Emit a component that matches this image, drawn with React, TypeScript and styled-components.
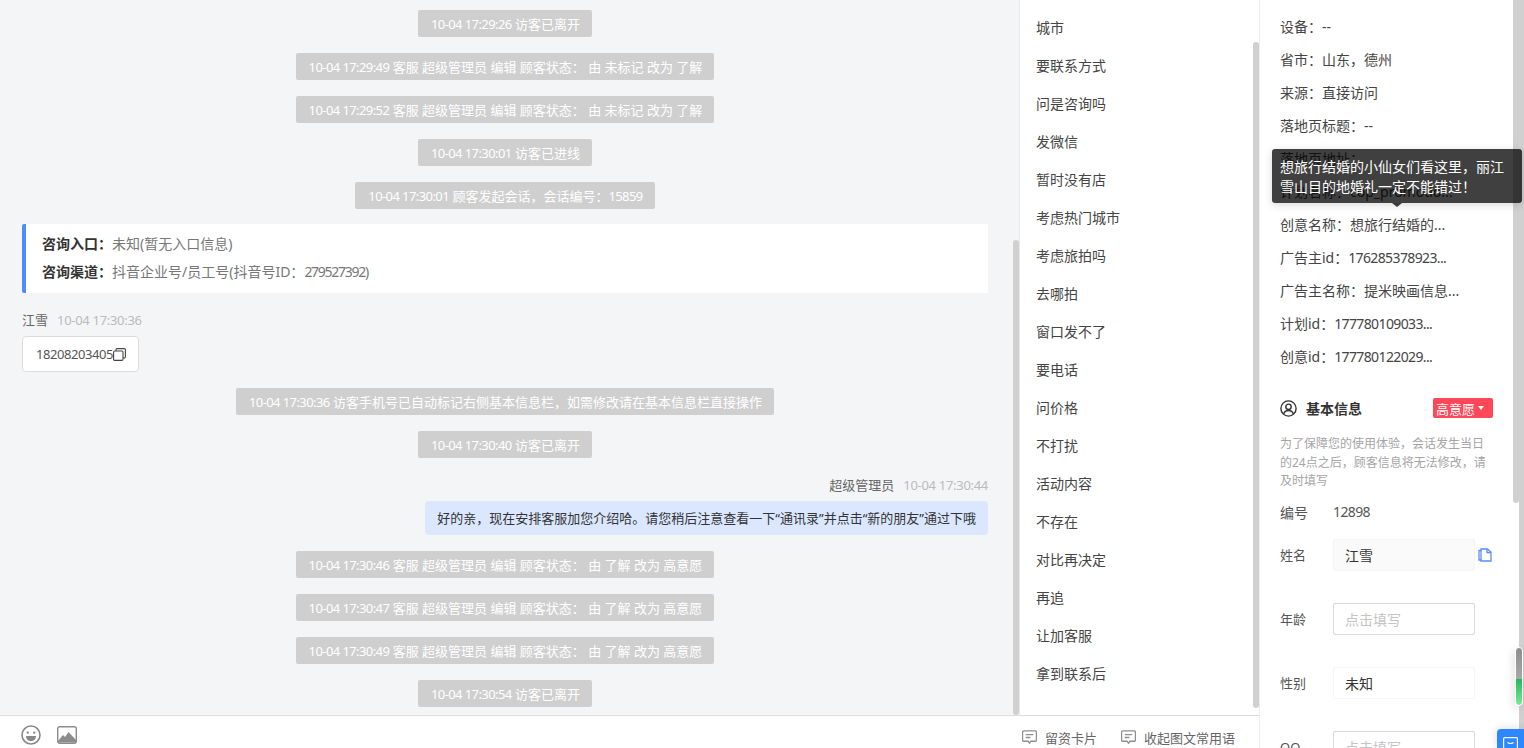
import React from 'react';
import styled, { createGlobalStyle } from 'styled-components';

const GlobalStyle = createGlobalStyle`
  html, body {
    margin: 0;
    padding: 0;
    height: 100%;
    overflow: hidden;
    background: #fff;
    font-family: "Noto Sans", "Noto Sans CJK SC", sans-serif;
    font-size: 14px;
    color: #333;
  }
  * {
    box-sizing: border-box;
  }
`;

const Page = styled.div`
  display: flex;
  width: 1524px;
  height: 748px;
  overflow: hidden;
`;

const Main = styled.div`
  display: flex;
  flex-direction: column;
  width: 1260px;
  height: 100%;
  border-right: 1px solid #ececec;
`;

const Top = styled.div`
  display: flex;
  height: 715px;
`;

const Chat = styled.div`
  position: relative;
  width: 1020px;
  height: 100%;
  padding: 10px 31px 0 22px;
  display: flex;
  flex-direction: column;
  gap: 16px;
  align-items: center;
  overflow: hidden;
  background: #f4f5f7;
  border-right: 1px solid #e8e8e8;
`;

// digits of the original font are narrower than Noto Sans
const Num = styled.span`
  letter-spacing: -0.045em;
`;

const Notice = styled.div`
  flex: none;
  height: 27px;
  padding: 0 12px 0 13px;
  display: flex;
  align-items: center;
  white-space: pre;
  border-radius: 2px;
  background: #cfcfcf;
  color: #fff;
  font-size: 13px;
`;

const EntryCard = styled.div`
  flex: none;
  align-self: stretch;
  height: 69px;
  margin-top: -1px;
  padding: 6px 16px;
  background: #fff;
  border-left: 4px solid #4c8dff;
  border-radius: 2px 0 0 2px;
  color: #777;
`;

const EntryLine = styled.div`
  height: 28px;
  line-height: 28px;
  b {
    color: #333;
    font-weight: 700;
  }
  ${Num} {
    letter-spacing: -0.09em;
  }
`;

const Group = styled.div<{ $mine?: boolean }>`
  flex: none;
  align-self: stretch;
  display: flex;
  flex-direction: column;
  align-items: ${(p) => (p.$mine ? 'flex-end' : 'flex-start')};
  gap: 7px;
`;

const SenderLine = styled.div`
  display: flex;
  gap: 9px;
  height: 20px;
  line-height: 22px;
  font-size: 13px;
  color: #666;
  span {
    color: #bbb;
    letter-spacing: -0.3px;
  }
`;

const PhoneBubble = styled.div`
  display: flex;
  align-items: center;
  height: 36px;
  padding: 0 12px 0 13px;
  background: #fff;
  border: 1px solid #dcdcdc;
  border-radius: 4px;
  font-size: 13px;
  letter-spacing: -0.43px;
  color: #555;
`;

const MineBubble = styled.div`
  height: 34px;
  padding: 0 12px;
  line-height: 34px;
  background: #dbe7ff;
  border-radius: 4px;
  color: #333;
  font-size: 13px;
`;

const ScrollThumb = styled.div<{ $top: number; $bottom: number; $left: number }>`
  position: absolute;
  top: ${(p) => p.$top}px;
  bottom: ${(p) => p.$bottom}px;
  left: ${(p) => p.$left}px;
  width: 6px;
  background: #d0d0d0;
  border-radius: 3px;
`;

const Phrases = styled.div`
  position: relative;
  width: 239px;
  height: 100%;
  padding-top: 9px;
  background: #fff;
`;

const Phrase = styled.div`
  height: 38px;
  line-height: 38px;
  padding-left: 16px;
  color: #444;
`;

const Footer = styled.div`
  flex: 1;
  display: flex;
  align-items: center;
  justify-content: space-between;
  border-top: 1px solid #dcdcdc;
  background: #fff;
  padding: 0 24px 0 21px;
`;

const Tools = styled.div`
  display: flex;
  align-items: center;
  gap: 16px;
  margin-top: 6px;
`;

const Actions = styled.div`
  display: flex;
  align-items: center;
  gap: 24px;
  margin-top: 10px;
`;

const Action = styled.div`
  display: flex;
  align-items: center;
  gap: 8px;
  font-size: 13px;
  color: #666;
`;

const Side = styled.div`
  position: relative;
  flex: 1;
  height: 100%;
  padding: 10px 0 0 20px;
  overflow: hidden;
  background: #fff;
`;

const InfoRow = styled.div`
  height: 33px;
  line-height: 33px;
  white-space: pre;
  color: #444;
`;

const SectionHead = styled.div`
  display: flex;
  align-items: center;
  height: 20px;
  width: 213px;
  margin-top: 25px;
  font-size: 14px;
  font-weight: 700;
  color: #333;
  svg {
    margin-right: 9px;
  }
`;

const IntentTag = styled.div`
  display: flex;
  align-items: center;
  gap: 3px;
  width: 60px;
  height: 20px;
  padding-left: 3px;
  margin-left: auto;
  border-radius: 2px;
  background: #ff4757;
  color: #fff;
  font-size: 13px;
  font-weight: 400;
  &::after {
    content: '';
    border: 3.5px solid transparent;
    border-top: 4px solid #fff;
    border-bottom: 0;
  }
`;

const Hint = styled.div`
  width: 212px;
  margin-top: 17px;
  font-size: 12px;
  line-height: 18.5px;
  color: #a5a5a5;
`;

const FormRow = styled.div<{ $height: number }>`
  display: flex;
  align-items: center;
  height: ${(p) => p.$height}px;
  color: #555;
`;

const FormLabel = styled.div<{ $large?: boolean }>`
  width: 53px;
  font-size: ${(p) => (p.$large ? 14 : 13)}px;
`;

const Field = styled.div<{ $variant: 'filled' | 'empty' | 'plain' }>`
  display: flex;
  align-items: center;
  width: 142px;
  height: 32px;
  padding-left: 11px;
  border-radius: 2px;
  border: 1px solid
    ${(p) => (p.$variant === 'empty' ? '#d9d9d9' : '#f5f5f5')};
  background: ${(p) => (p.$variant === 'filled' ? '#fafafa' : '#fff')};
  color: ${(p) => (p.$variant === 'empty' ? '#c4c4c4' : '#333')};
`;

const CopyField = styled.span`
  display: flex;
  margin-left: 3px;
`;

const Tooltip = styled.div`
  position: absolute;
  left: 12px;
  top: 149px;
  width: 250px;
  height: 54px;
  padding: 8px 8px;
  border-radius: 3px;
  background: rgba(0, 0, 0, 0.75);
  box-shadow: 0 2px 8px rgba(0, 0, 0, 0.15);
  color: #fff;
  font-size: 14px;
  line-height: 20px;
  font-weight: 400;
  &::after {
    content: '';
    position: absolute;
    left: 120px;
    top: 54px;
    border: 5px solid transparent;
    border-top: 4px solid rgba(0, 0, 0, 0.75);
    border-bottom: 0;
  }
`;

const OuterTrack = styled.div`
  position: absolute;
  right: 0;
  top: 0;
  bottom: 0;
  width: 5px;
  background: #d0d0d0;
`;

const MiniBar = styled.div`
  position: absolute;
  left: 255px;
  top: 647px;
  width: 8px;
  height: 59px;
  border-radius: 4px;
  border: 1px solid #fff;
  overflow: hidden;
  box-shadow: -2px 3px 8px rgba(0, 0, 0, 0.12);
  background: linear-gradient(#8e8e8e, #a8a8a8 54%, #22b85a 54%, #7fe79a);
`;

const ChatButton = styled.div`
  position: absolute;
  right: 0;
  top: 729px;
  width: 27px;
  height: 19px;
  display: flex;
  justify-content: center;
  padding-top: 8px;
  border-radius: 4px 0 0 0;
  background: #2d87ff;
  box-shadow: 0 0 10px rgba(0, 0, 0, 0.15);
`;

const SmileIcon = () => (
  <svg width="20" height="20" viewBox="0 0 20 20">
    <circle cx="10" cy="10" r="9" fill="none" stroke="#888" strokeWidth="1.6" />
    <circle cx="6.8" cy="7.6" r="1.2" fill="#888" />
    <circle cx="13.2" cy="7.6" r="1.2" fill="#888" />
    <path d="M5 11h10c0 3-2.200 5-5 5s-5-2-5-5z" fill="#888" />
  </svg>
);

const PictureIcon = () => (
  <svg width="20" height="18" viewBox="0 0 20 18">
    <rect x="0.7" y="0.7" width="18.600" height="16.600" rx="2" fill="#fff" stroke="#8c8c8c" strokeWidth="1.400" />
    <path d="M1 15l5-6 2 2 3.500-5 7.500 8v2.500H1z" fill="#8c8c8c" />
  </svg>
);

const MessageIcon = () => (
  <svg width="15" height="15" viewBox="0 0 16 16" fill="none" stroke="#8f8f8f" strokeWidth="1.400">
    <path d="M2 1h12a1.400 1.400 0 0 1 1.400 1.400v8.200A1.400 1.400 0 0 1 14 12H9.500L8 14 6.500 12H2A1.400 1.400 0 0 1 .6 10.600V2.400A1.400 1.400 0 0 1 2 1z" />
    <path d="M4 5h8M4 8h5" />
  </svg>
);

const CopyIcon = () => (
  <svg width="13" height="13" viewBox="0 0 13 13" fill="none" stroke="#444" strokeWidth="1.100">
    <rect x="0.600" y="3" width="9.400" height="9.400" rx="1.200" />
    <path d="M3 3V1.800A1.200 1.200 0 0 1 4.200.6h7a1.200 1.200 0 0 1 1.200 1.200v7a1.200 1.200 0 0 1-1.200 1.200H10" />
  </svg>
);

const UserCircleIcon = () => (
  <svg width="17" height="17" viewBox="0 0 17 17" fill="none" stroke="#333" strokeWidth="1.400">
    <circle cx="8.500" cy="8.500" r="7.600" />
    <circle cx="8.500" cy="6.800" r="2.700" />
    <path d="M3.600 14c.7-2.300 2.600-3.500 4.900-3.500s4.200 1.200 4.900 3.500" />
  </svg>
);

const DocIcon = () => (
  <svg width="14" height="14" viewBox="0 0 14 14" fill="none" stroke="#5b8cff" strokeWidth="1.300">
    <path d="M1 2.500h2V1h6.500L13 4v9H3v-1H1z" />
    <path d="M3 2.500V12" />
    <path d="M9 1v3.500h4" />
  </svg>
);

const TrayIcon = () => (
  <svg width="15" height="11" viewBox="0 0 15 11" fill="none" stroke="#fff" strokeWidth="1.200">
    <rect x="0.600" y="0.600" width="13.800" height="14" rx="1" />
    <path d="M4.500 5.500c1.500 1.300 4.500 1.300 6 0" />
  </svg>
);

const StatusChange: React.FC<{ time: string; from: string; to: string }> = ({ time, from, to }) => (
  <Notice>
    <Num>{time}</Num>{` 客服 超级管理员 编辑 顾客状态： 由 ${from} 改为 ${to}`}
  </Notice>
);

const phrases = [
  '城市', '要联系方式', '问是咨询吗', '发微信', '暂时没有店', '考虑热门城市',
  '考虑旅拍吗', '去哪拍', '窗口发不了', '要电话', '问价格', '不打扰',
  '活动内容', '不存在', '对比再决定', '再追', '让加客服', '拿到联系后',
];

const App: React.FC = () => (
  <Page>
    <GlobalStyle />
    <Main>
      <Top>
        <Chat>
          <Notice><Num>10-04 17:29:26</Num> 访客已离开</Notice>
          <StatusChange time="10-04 17:29:49" from="未标记" to="了解" />
          <StatusChange time="10-04 17:29:52" from="未标记" to="了解" />
          <Notice><Num>10-04 17:30:01</Num> 访客已进线</Notice>
          <Notice><Num>10-04 17:30:01</Num> 顾客发起会话，会话编号：<Num>15859</Num></Notice>
          <EntryCard>
            <EntryLine><b>咨询入口：</b>未知(暂无入口信息)</EntryLine>
            <EntryLine><b>咨询渠道：</b>抖音企业号/员工号(抖音号ID：<Num>279527392</Num>)</EntryLine>
          </EntryCard>
          <Group>
            <SenderLine>江雪<span>10-04 17:30:36</span></SenderLine>
            <PhoneBubble>18208203405<CopyIcon /></PhoneBubble>
          </Group>
          <Notice><Num>10-04 17:30:36</Num> 访客手机号已自动标记右侧基本信息栏，如需修改请在基本信息栏直接操作</Notice>
          <Notice><Num>10-04 17:30:40</Num> 访客已离开</Notice>
          <Group $mine>
            <SenderLine>超级管理员<span>10-04 17:30:44</span></SenderLine>
            <MineBubble>好的亲，现在安排客服加您介绍哈。请您稍后注意查看一下“通讯录”并点击“新的朋友”通过下哦</MineBubble>
          </Group>
          <StatusChange time="10-04 17:30:46" from="了解" to="高意愿" />
          <StatusChange time="10-04 17:30:47" from="了解" to="高意愿" />
          <StatusChange time="10-04 17:30:49" from="了解" to="高意愿" />
          <Notice><Num>10-04 17:30:54</Num> 访客已离开</Notice>
          <ScrollThumb $top={240} $bottom={0} $left={1013} />
        </Chat>
        <Phrases>
          {phrases.map((p) => <Phrase key={p}>{p}</Phrase>)}
          <ScrollThumb $top={42} $bottom={7} $left={233} />
        </Phrases>
      </Top>
      <Footer>
        <Tools>
          <SmileIcon />
          <PictureIcon />
        </Tools>
        <Actions>
          <Action><MessageIcon />留资卡片</Action>
          <Action><MessageIcon />收起图文常用语</Action>
        </Actions>
      </Footer>
    </Main>
    <Side>
      <InfoRow>设备：--</InfoRow>
      <InfoRow>省市：山东，德州</InfoRow>
      <InfoRow>来源：直接访问</InfoRow>
      <InfoRow>落地页标题：--</InfoRow>
      <InfoRow>落地页地址：</InfoRow>
      <InfoRow>计划名称：cop_promotio...</InfoRow>
      <InfoRow>创意名称：想旅行结婚的...</InfoRow>
      <InfoRow>广告主id：<Num>176285378923...</Num></InfoRow>
      <InfoRow>广告主名称：提米映画信息...</InfoRow>
      <InfoRow>计划id：<Num>177780109033...</Num></InfoRow>
      <InfoRow>创意id：<Num>177780122029...</Num></InfoRow>
      <SectionHead>
        <UserCircleIcon />基本信息
        <IntentTag>高意愿</IntentTag>
      </SectionHead>
      <Hint>为了保障您的使用体验，会话发生当日的24点之后，顾客信息将无法修改，请及时填写</Hint>
      <FormRow $height={42}><FormLabel $large>编号</FormLabel><Num>12898</Num></FormRow>
      <FormRow $height={44}>
        <FormLabel>姓名</FormLabel>
        <Field $variant="filled">江雪</Field>
        <CopyField><DocIcon /></CopyField>
      </FormRow>
      <FormRow $height={84}><FormLabel>年龄</FormLabel><Field $variant="empty">点击填写</Field></FormRow>
      <FormRow $height={44}><FormLabel>性别</FormLabel><Field $variant="plain">未知</Field></FormRow>
      <FormRow $height={84}><FormLabel>QQ</FormLabel><Field $variant="empty">点击填写</Field></FormRow>
      <ScrollThumb $top={-3} $bottom={245} $left={253} />
      <OuterTrack />
      <Tooltip>想旅行结婚的小仙女们看这里，丽江雪山目的地婚礼一定不能错过！</Tooltip>
      <MiniBar />
      <ChatButton><TrayIcon /></ChatButton>
    </Side>
  </Page>
);

export default App;
